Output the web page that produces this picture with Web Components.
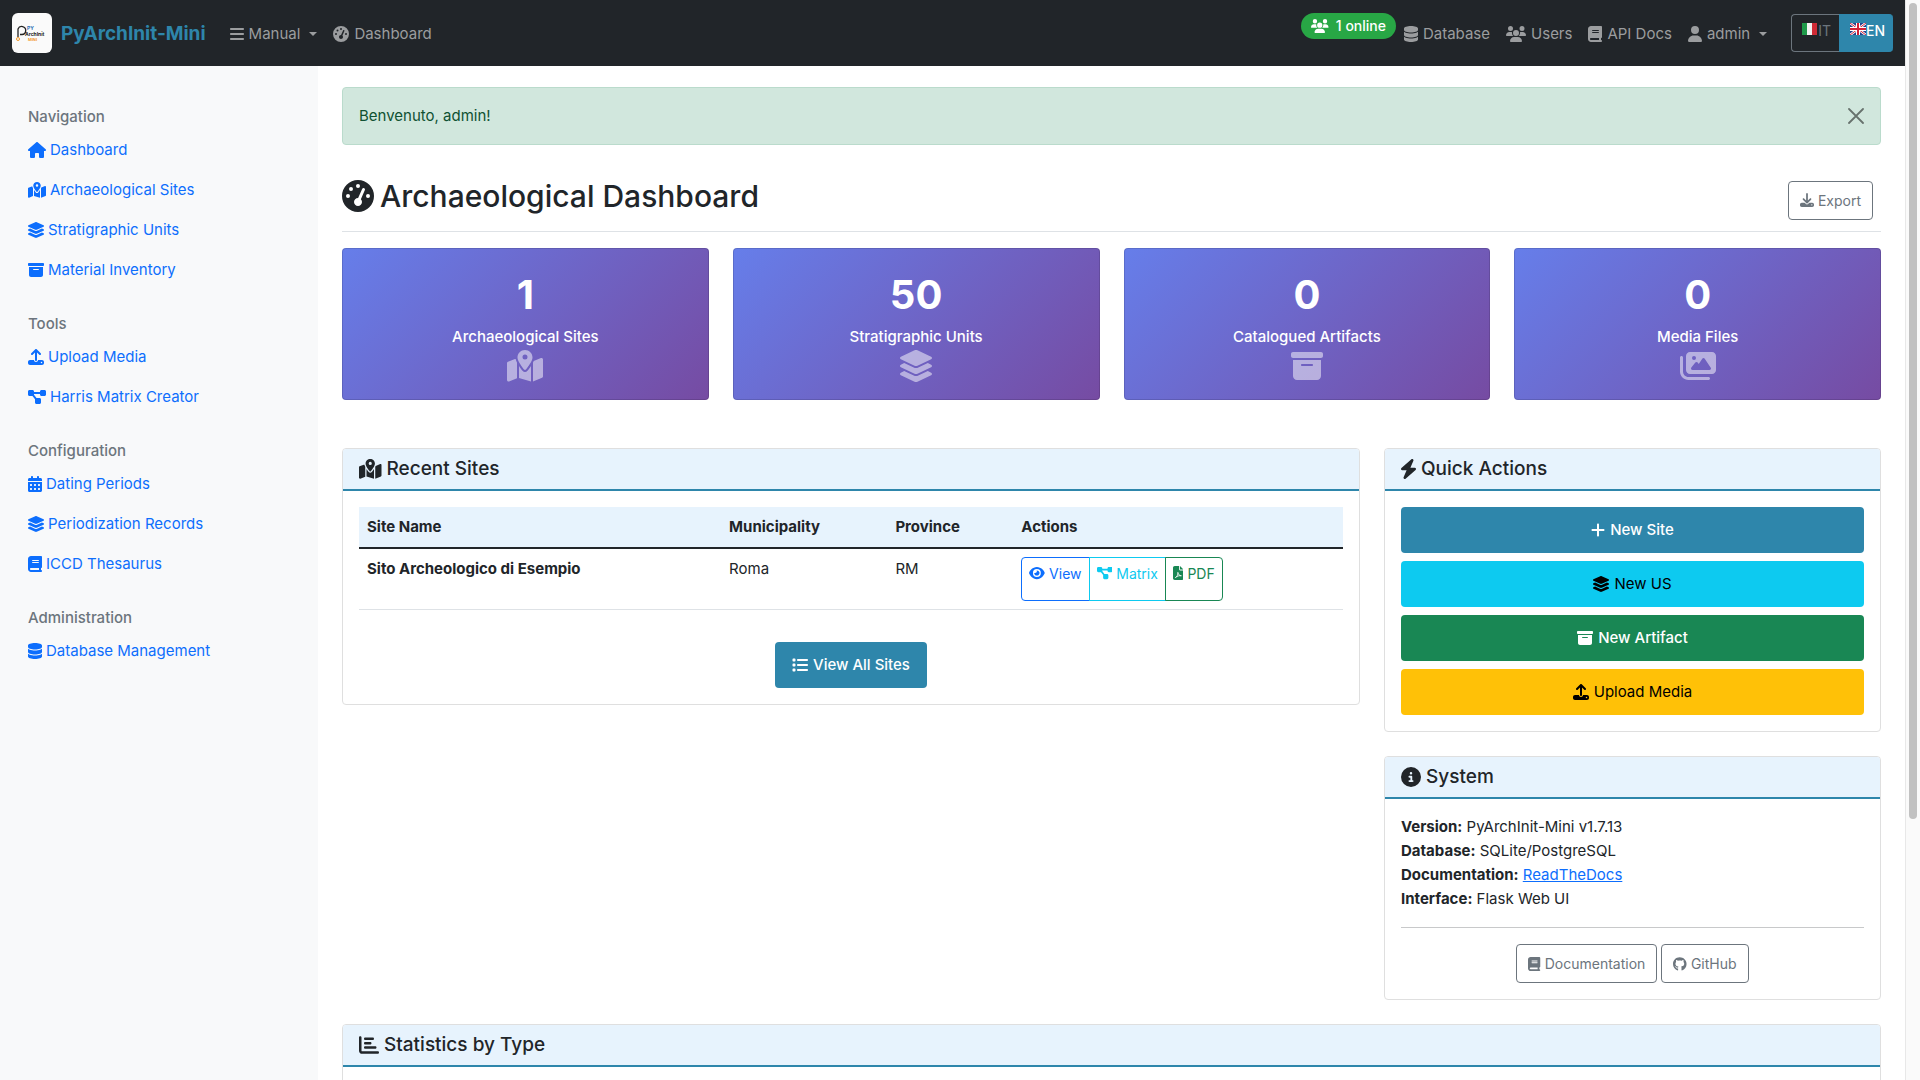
<!DOCTYPE html>
<html lang="en">
<head>
<meta charset="utf-8">
<title>PyArchInit-Mini</title>
<style>
  :root {
    --brand: #2e86ab;
    --ink: #212529;
    --muted: #6c757d;
    --link: #0d6efd;
    --tint: #e7f3fd;
    --fs: 15px;
    --fs-sm: 14px;
    --fs-lg: 19px;
  }
  body {
    margin: 0;
    display: flex;
    height: 100vh;
    overflow: hidden;
    background: #fff;
    color: var(--ink);
    font: 400 var(--fs)/24px Inter, "Liberation Sans", sans-serif;
  }
</style>
</head>
<body>
<app-page>
  <nav-bar slot="nav">
    <nav-item slot="start" icon="bars" menu>Manual</nav-item>
    <nav-item slot="start" icon="gauge">Dashboard</nav-item>
    <online-badge slot="end">1 online</online-badge>
    <nav-item slot="end" icon="database">Database</nav-item>
    <nav-item slot="end" icon="users">Users</nav-item>
    <nav-item slot="end" icon="book">API Docs</nav-item>
    <nav-item slot="end" icon="user" menu>admin</nav-item>
    <lang-switch slot="end"></lang-switch>
  </nav-bar>

  <side-bar slot="side">
    <side-group label="Navigation">
      <side-link icon="home">Dashboard</side-link>
      <side-link icon="map">Archaeological Sites</side-link>
      <side-link icon="layers">Stratigraphic Units</side-link>
      <side-link icon="archive">Material Inventory</side-link>
    </side-group>
    <side-group label="Tools">
      <side-link icon="upload">Upload Media</side-link>
      <side-link icon="diagram">Harris Matrix Creator</side-link>
    </side-group>
    <side-group label="Configuration">
      <side-link icon="calendar">Dating Periods</side-link>
      <side-link icon="layers">Periodization Records</side-link>
      <side-link icon="book">ICCD Thesaurus</side-link>
    </side-group>
    <side-group label="Administration">
      <side-link icon="database">Database Management</side-link>
    </side-group>
  </side-bar>

  <flash-message>Benvenuto, admin!</flash-message>
  <page-heading icon="gauge" label="Archaeological Dashboard">
    <ui-button kind="outline" icon="download">Export</ui-button>
  </page-heading>
  <dash-grid>
    <stat-card value="1" icon="map">Archaeological Sites</stat-card>
    <stat-card value="50" icon="layers">Stratigraphic Units</stat-card>
    <stat-card value="0" icon="archive">Catalogued Artifacts</stat-card>
    <stat-card value="0" icon="images">Media Files</stat-card>
    <panel-card class="wide" icon="map" label="Recent Sites">
      <sites-table></sites-table>
    </panel-card>
    <card-stack>
      <panel-card icon="bolt" label="Quick Actions">
        <action-list>
          <ui-button kind="primary" icon="plus">New Site</ui-button>
          <ui-button kind="info" icon="layers">New US</ui-button>
          <ui-button kind="success" icon="archive">New Artifact</ui-button>
          <ui-button kind="warning" icon="upload">Upload Media</ui-button>
        </action-list>
      </panel-card>
      <panel-card icon="info" label="System">
        <system-info>
          <ui-button kind="outline" icon="book">Documentation</ui-button>
          <ui-button kind="outline" icon="github">GitHub</ui-button>
        </system-info>
      </panel-card>
    </card-stack>
    <panel-card class="full" icon="chart" label="Statistics by Type"><stats-body></stats-body></panel-card>
  </dash-grid>
</app-page>
<scroll-rail></scroll-rail>

<script>
const ICONS = {
  home: ['0 0 576 512', 'M575.8 255.5c0 18-15 32.1-32 32.1h-32l.7 160.2c0 2.7-.2 5.4-.5 8.1V472c0 22.1-17.9 40-40 40H392c-22.1 0-40-17.9-40-40V384c0-17.7-14.3-32-32-32H256c-17.7 0-32 14.3-32 32v88c0 22.1-17.9 40-40 40H104c-22.1 0-40-17.9-40-40V287.6H32c-18 0-32-14-32-32.1c0-9 3-17 10-24L266.4 8c7-7 15-8 22-8s15 2 21 7L564.8 231.5c8 7 12 15 11 24z'],
  map: ['0 0 576 512', 'M408 120c0 54.6-73.1 151.9-105.2 192c-7.7 9.6-22 9.6-29.6 0C241.1 271.9 168 174.6 168 120C168 53.7 221.7 0 288 0s120 53.7 120 120zm8 80.4c3.5-6.9 6.7-13.8 9.6-20.6c.5-1.2 1-2.5 1.5-3.7l116-46.4C558.9 123.4 576 135 576 152V422.8c0 9.8-6 18.6-15.1 22.3L416 503V200.4zM137.6 138.3c2.4 14.1 7.2 28.3 12.8 41.5c2.9 6.8 6.1 13.7 9.6 20.6V451.8L32.9 502.7C17.1 509 0 497.4 0 480.4V209.6c0-9.8 6-18.6 15.1-22.3l122.6-49zM327.8 332c13.9-17.4 35.7-45.7 56.2-77V504.3L192 449.4V255c20.5 31.3 42.3 59.6 56.2 77c20.5 25.6 59.1 25.6 79.6 0zM288 152a40 40 0 1 0 0-80 40 40 0 1 0 0 80z'],
  layers: ['32 0 512 512', 'M264.5 5.2c14.9-6.9 32.1-6.9 47 0l218.6 101c8.5 3.9 13.9 12.4 13.9 21.8s-5.4 17.9-13.9 21.8l-218.6 101c-14.9 6.9-32.1 6.9-47 0L45.9 149.8C37.4 145.8 32 137.3 32 128s5.4-17.9 13.9-21.8L264.5 5.2zM476.9 209.6l53.2 24.6c8.5 3.9 13.9 12.4 13.9 21.8s-5.4 17.9-13.9 21.8l-218.6 101c-14.9 6.9-32.1 6.9-47 0L45.9 277.8C37.4 273.8 32 265.3 32 256s5.4-17.9 13.9-21.8l53.2-24.6 152 70.2c23.4 10.8 50.4 10.8 73.8 0l152-70.2zm-152 198.2l152-70.2 53.2 24.6c8.5 3.9 13.9 12.4 13.9 21.8s-5.4 17.9-13.9 21.8l-218.6 101c-14.9 6.9-32.1 6.9-47 0L45.9 405.8C37.4 401.8 32 393.3 32 384s5.4-17.9 13.9-21.8l53.2-24.6 152 70.2c23.4 10.8 50.4 10.8 73.8 0z'],
  archive: ['0 0 512 512', 'M32 32H480c17.7 0 32 14.3 32 32V96c0 17.7-14.3 32-32 32H32C14.3 128 0 113.7 0 96V64C0 46.3 14.3 32 32 32zm0 128H480V416c0 35.3-28.7 64-64 64H96c-35.3 0-64-28.7-64-64V160zm128 80c0 8.8 7.2 16 16 16H336c8.8 0 16-7.2 16-16s-7.2-16-16-16H176c-8.8 0-16 7.2-16 16z'],
  upload: ['0 0 512 512', 'M288 109.3V352c0 17.7-14.3 32-32 32s-32-14.3-32-32V109.3l-73.4 73.4c-12.5 12.5-32.8 12.5-45.3 0s-12.5-32.8 0-45.3l128-128c12.5-12.5 32.8-12.5 45.3 0l128 128c12.5 12.5 12.5 32.8 0 45.3s-32.8 12.5-45.3 0L288 109.3zM64 352H192c0 35.3 28.7 64 64 64s64-28.7 64-64H448c35.3 0 64 28.7 64 64v32c0 35.3-28.7 64-64 64H64c-35.3 0-64-28.7-64-64V416c0-35.3 28.7-64 64-64zM432 456a24 24 0 1 0 0-48 24 24 0 1 0 0 48z'],
  download: ['0 0 512 512', 'M288 32c0-17.7-14.3-32-32-32s-32 14.3-32 32V274.7l-73.4-73.4c-12.5-12.5-32.8-12.5-45.3 0s-12.5 32.8 0 45.3l128 128c12.5 12.5 32.8 12.5 45.3 0l128-128c12.5-12.5 12.5-32.8 0-45.3s-32.8-12.5-45.3 0L288 274.7V32zM64 352c-35.3 0-64 28.7-64 64v32c0 35.3 28.7 64 64 64H448c35.3 0 64-28.7 64-64V416c0-35.3-28.7-64-64-64H346.5l-45.3 45.3c-25 25-65.5 25-90.5 0L165.5 352H64zm368 56a24 24 0 1 1 0 48 24 24 0 1 1 0-48z'],
  diagram: ['0 0 576 512', 'M0 80C0 53.5 21.5 32 48 32h96c26.5 0 48 21.5 48 48V96H384V80c0-26.5 21.5-48 48-48h96c26.5 0 48 21.5 48 48v96c0 26.5-21.5 48-48 48H432c-26.5 0-48-21.5-48-48V160H192v16c0 1.7-.1 3.4-.3 5L272 288h96c26.5 0 48 21.5 48 48v96c0 26.5-21.5 48-48 48H272c-26.5 0-48-21.5-48-48V336c0-1.7 .1-3.4 .3-5L144 224H48c-26.5 0-48-21.5-48-48V80z'],
  calendar: ['0 0 448 512', 'M128 0c17.7 0 32 14.3 32 32V64H288V32c0-17.7 14.3-32 32-32s32 14.3 32 32V64h48c26.5 0 48 21.5 48 48v48H0V112C0 85.5 21.5 64 48 64H96V32c0-17.7 14.3-32 32-32zM0 192H448V464c0 26.5-21.5 48-48 48H48c-26.5 0-48-21.5-48-48V192zm64 80v32c0 8.8 7.2 16 16 16h32c8.8 0 16-7.2 16-16V272c0-8.8-7.2-16-16-16H80c-8.8 0-16 7.2-16 16zm128 0v32c0 8.8 7.2 16 16 16h32c8.8 0 16-7.2 16-16V272c0-8.8-7.2-16-16-16H208c-8.8 0-16 7.2-16 16zm144-16c-8.8 0-16 7.2-16 16v32c0 8.8 7.2 16 16 16h32c8.8 0 16-7.2 16-16V272c0-8.8-7.2-16-16-16H336zM64 400v32c0 8.8 7.2 16 16 16h32c8.8 0 16-7.2 16-16V400c0-8.8-7.2-16-16-16H80c-8.8 0-16 7.2-16 16zm144-16c-8.8 0-16 7.2-16 16v32c0 8.8 7.2 16 16 16h32c8.8 0 16-7.2 16-16V400c0-8.8-7.2-16-16-16H208zm112 16v32c0 8.8 7.2 16 16 16h32c8.8 0 16-7.2 16-16V400c0-8.8-7.2-16-16-16H336c-8.8 0-16 7.2-16 16z'],
  book: ['0 0 448 512', 'M96 0C43 0 0 43 0 96V416c0 53 43 96 96 96H416c17.7 0 32-14.3 32-32s-14.3-32-32-32V384c17.7 0 32-14.3 32-32V32c0-17.7-14.3-32-32-32H96zm0 384H352v64H96c-17.7 0-32-14.3-32-32s14.3-32 32-32zm32-240c0-8.8 7.2-16 16-16H336c8.8 0 16 7.2 16 16s-7.2 16-16 16H144c-8.8 0-16-7.2-16-16zm16 48H336c8.8 0 16 7.2 16 16s-7.2 16-16 16H144c-8.8 0-16-7.2-16-16s7.2-16 16-16z'],
  database: ['0 0 448 512', 'M448 80v48c0 44.2-100.3 80-224 80S0 172.2 0 128V80C0 35.8 100.3 0 224 0S448 35.8 448 80zM393.2 214.7c20.8-7.4 39.9-16.9 54.8-28.6V288c0 44.2-100.3 80-224 80S0 332.2 0 288V186.1c14.9 11.8 34 21.2 54.8 28.6C99.7 230.7 159.5 240 224 240s124.3-9.3 169.2-25.3zM0 346.1c14.9 11.8 34 21.2 54.8 28.6C99.7 390.7 159.5 400 224 400s124.3-9.3 169.2-25.3c20.8-7.4 39.9-16.9 54.8-28.6V432c0 44.2-100.3 80-224 80S0 476.2 0 432V346.1z'],
  bars: ['0 0 448 512', 'M0 96C0 78.3 14.3 64 32 64H416c17.7 0 32 14.3 32 32s-14.3 32-32 32H32C14.3 128 0 113.7 0 96zM0 256c0-17.7 14.3-32 32-32H416c17.7 0 32 14.3 32 32s-14.3 32-32 32H32c-17.7 0-32-14.3-32-32zM448 416c0 17.7-14.3 32-32 32H32c-17.7 0-32-14.3-32-32s14.3-32 32-32H416c17.7 0 32 14.3 32 32z'],
  gauge: ['0 0 512 512', 'M0 256a256 256 0 1 1 512 0A256 256 0 1 1 0 256zM288 96a32 32 0 1 0 -64 0 32 32 0 1 0 64 0zM256 416c35.3 0 64-28.7 64-64c0-17.4-6.9-33.1-18.1-44.6L366 161.7c5.3-12.1-.2-26.3-12.3-31.6s-26.3 .2-31.6 12.3L257.9 288c-.6 0-1.3 0-1.9 0c-35.3 0-64 28.7-64 64s28.7 64 64 64zM176 144a32 32 0 1 0 -64 0 32 32 0 1 0 64 0zM96 288a32 32 0 1 0 0-64 32 32 0 1 0 0 64zm352-32a32 32 0 1 0 -64 0 32 32 0 1 0 64 0z'],
  users: ['0 0 640 512', 'M144 0a80 80 0 1 1 0 160A80 80 0 1 1 144 0zM512 0a80 80 0 1 1 0 160A80 80 0 1 1 512 0zM0 298.7C0 239.8 47.8 192 106.7 192h42.7c15.9 0 31 3.5 44.6 9.7c-1.3 7.2-1.9 14.7-1.9 22.3c0 38.2 16.8 72.5 43.3 96c-.2 0-.4 0-.7 0H21.3C9.6 320 0 310.4 0 298.7zM405.3 320c-.2 0-.4 0-.7 0c26.6-23.5 43.3-57.8 43.3-96c0-7.6-.7-15-1.9-22.3c13.6-6.3 28.7-9.7 44.6-9.7h42.7C592.2 192 640 239.8 640 298.7c0 11.8-9.6 21.3-21.3 21.3H405.3zM224 224a96 96 0 1 1 192 0 96 96 0 1 1 -192 0zM128 485.3C128 411.7 187.7 352 261.3 352H378.7C452.3 352 512 411.7 512 485.3c0 14.7-11.9 26.7-26.7 26.7H154.7c-14.7 0-26.7-11.9-26.7-26.7z'],
  user: ['0 0 448 512', 'M224 256A128 128 0 1 0 224 0a128 128 0 1 0 0 256zm-45.7 48C79.8 304 0 383.8 0 482.3C0 498.7 13.3 512 29.7 512H418.3c16.4 0 29.7-13.3 29.7-29.7C448 383.8 368.2 304 269.7 304H178.3z'],
  bolt: ['32 0 384 512', 'M349.4 44.6c5.9-13.7 1.5-29.7-10.6-38.5s-28.6-8-39.9 1.8l-256 224c-10 8.8-13.6 22.9-8.9 35.3S50.7 288 64 288H175.5L98.6 467.4c-5.9 13.7-1.5 29.7 10.6 38.5s28.6 8 39.9-1.8l256-224c10-8.8 13.6-22.9 8.9-35.3s-16.6-20.7-30-20.7H272.5L349.4 44.6z'],
  info: ['0 0 512 512', 'M256 512A256 256 0 1 0 256 0a256 256 0 1 0 0 512zM216 336h24V272H216c-13.3 0-24-10.7-24-24s10.7-24 24-24h48c13.3 0 24 10.7 24 24v88h8c13.3 0 24 10.7 24 24s-10.7 24-24 24H216c-13.3 0-24-10.7-24-24s10.7-24 24-24zm40-208a32 32 0 1 1 0 64 32 32 0 1 1 0-64z'],
  chart: ['0 0 512 512', 'M32 32c17.7 0 32 14.3 32 32V400c0 8.8 7.2 16 16 16H480c17.7 0 32 14.3 32 32s-14.3 32-32 32H80c-44.2 0-80-35.8-80-80V64C0 46.3 14.3 32 32 32zm96 64c0-17.7 14.3-32 32-32l192 0c17.7 0 32 14.3 32 32s-14.3 32-32 32H160c-17.7 0-32-14.3-32-32zm32 80H288c17.7 0 32 14.3 32 32s-14.3 32-32 32H160c-17.7 0-32-14.3-32-32s14.3-32 32-32zm0 112H416c17.7 0 32 14.3 32 32s-14.3 32-32 32H160c-17.7 0-32-14.3-32-32s14.3-32 32-32z'],
  plus: ['0 0 448 512', 'M256 80c0-17.7-14.3-32-32-32s-32 14.3-32 32V224H48c-17.7 0-32 14.3-32 32s14.3 32 32 32H192V432c0 17.7 14.3 32 32 32s32-14.3 32-32V288H400c17.7 0 32-14.3 32-32s-14.3-32-32-32H256V80z'],
  list: ['0 0 512 512', 'M40 48C26.7 48 16 58.7 16 72v48c0 13.3 10.7 24 24 24H88c13.3 0 24-10.7 24-24V72c0-13.3-10.7-24-24-24H40zM192 64c-17.7 0-32 14.3-32 32s14.3 32 32 32H480c17.7 0 32-14.3 32-32s-14.3-32-32-32H192zm0 160c-17.7 0-32 14.3-32 32s14.3 32 32 32H480c17.7 0 32-14.3 32-32s-14.3-32-32-32H192zm0 160c-17.7 0-32 14.3-32 32s14.3 32 32 32H480c17.7 0 32-14.3 32-32s-14.3-32-32-32H192zM16 232v48c0 13.3 10.7 24 24 24H88c13.3 0 24-10.7 24-24V232c0-13.3-10.7-24-24-24H40c-13.3 0-24 10.7-24 24zM40 368c-13.3 0-24 10.7-24 24v48c0 13.3 10.7 24 24 24H88c13.3 0 24-10.7 24-24V392c0-13.3-10.7-24-24-24H40z'],
  eye: ['0 0 576 512', 'M288 32c-80.8 0-145.5 36.8-192.6 80.6C48.6 156 17.3 208 2.5 243.7c-3.3 7.9-3.3 16.7 0 24.6C17.3 304 48.6 356 95.4 399.4C142.5 443.2 207.2 480 288 480s145.5-36.8 192.6-80.6c46.8-43.5 78.1-95.4 93-131.1c3.3-7.9 3.3-16.7 0-24.6c-14.9-35.7-46.2-87.7-93-131.1C433.5 68.8 368.8 32 288 32zM144 256a144 144 0 1 1 288 0 144 144 0 1 1 -288 0zm144-64c0 35.3-28.7 64-64 64c-7.1 0-13.9-1.2-20.3-3.3c-5.5-1.8-11.9 1.6-11.7 7.4c.3 6.9 1.3 13.8 3.2 20.7c13.7 51.2 66.4 81.6 117.6 67.9s81.6-66.4 67.9-117.6c-11.1-41.5-47.8-69.4-88.6-71.1c-5.8-.2-9.2 6.1-7.4 11.7c2.1 6.4 3.3 13.2 3.3 20.3z'],
  pdf: ['0 0 384 512', 'M0 64C0 28.7 28.7 0 64 0H224V128c0 17.7 14.3 32 32 32H384V448c0 35.3-28.7 64-64 64H64c-35.3 0-64-28.7-64-64V64zm384 64H256V0L384 128z',
    '<path d="M88 424C150 392 186 316 178 232C196 312 238 362 306 356C232 346 150 366 88 424Z" fill="none" stroke="#fff" stroke-width="30" stroke-linejoin="round"/>'],
  images: ['0 0 576 512', 'M160 32c-35.3 0-64 28.7-64 64V320c0 35.3 28.7 64 64 64H512c35.3 0 64-28.7 64-64V96c0-35.3-28.7-64-64-64H160zM396 138.7l96 144c4.9 7.4 5.4 16.8 1.2 24.6S480.9 320 472 320H328 280 200c-9.2 0-17.6-5.3-21.6-13.6s-2.9-18.2 2.9-25.4l64-80c4.6-5.7 11.4-9 18.7-9s14.2 3.3 18.7 9l17.3 21.6 56-84C360.5 132 368 128 376 128s15.5 4 20 10.7zM192 128a32 32 0 1 1 64 0 32 32 0 1 1 -64 0zM48 120c0-13.3-10.7-24-24-24S0 106.7 0 120V344c0 75.1 60.9 136 136 136H456c13.3 0 24-10.7 24-24s-10.7-24-24-24H136c-48.6 0-88-39.4-88-88V120z'],
  github: ['0 0 496 512', 'M244.8 8C106.1 8 0 113.3 0 252c0 110.9 69.8 205.8 169.5 239.2 12.8 2.3 17.3-5.6 17.3-12.1 0-6.2-.3-40.4-.3-61.4 0 0-70 15-84.7-29.8 0 0-11.4-29.1-27.8-36.6 0 0-22.9-15.7 1.6-15.4 0 0 24.9 2 38.6 25.8 21.9 38.6 58.6 27.5 72.9 20.9 2.3-16 8.8-27.1 16-33.7-55.9-6.2-112.3-14.3-112.3-110.5 0-27.5 7.6-41.3 23.6-58.9-2.6-6.5-11.1-33.3 2.6-67.9 20.9-6.5 69 27 69 27 20-5.6 41.5-8.5 62.8-8.5s42.8 2.9 62.8 8.5c0 0 48.1-33.6 69-27 13.7 34.7 5.2 61.4 2.6 67.9 16 17.7 25.8 31.5 25.8 58.9 0 96.5-58.9 104.2-114.8 110.5 9.2 7.9 17 22.9 17 46.4 0 33.7-.3 75.4-.3 83.6 0 6.5 4.6 14.4 17.3 12.1C428.2 457.8 496 362.9 496 252 496 113.3 383.5 8 244.8 8z']
};

// Registers an element whose shadow root is built from render(element).
function define(name, render) {
  customElements.define(name, class extends HTMLElement {
    connectedCallback() {
      if (this.shadowRoot) return;
      this.attachShadow({ mode: 'open' }).innerHTML = render(this);
    }
  });
}
const attr = (el, key) => el.getAttribute(key) || '';
const icon = name => `<ui-icon name="${name}"></ui-icon>`;

define('ui-icon', el => {
  const [box, d, extra = ''] = ICONS[attr(el, 'name')];
  return `<style>
    :host { display: inline-flex; flex: none; }
    svg { display: block; height: var(--icon, 16px); width: auto; fill: currentColor; fill-rule: evenodd; }
  </style><svg viewBox="${box}" aria-hidden="true"><path d="${d}"/>${extra}</svg>`;
});

define('app-page', () => `<style>
    :host { flex: 1; min-width: 0; display: flex; flex-direction: column; overflow-y: auto; scrollbar-width: none; }
    .row { display: flex; flex: 1 0 auto; }
    aside, main { box-sizing: border-box; }
    aside { flex: 0 0 318px; background: #f8f9fa; }
    main { flex: 1; min-width: 0; padding: 21px 24px 24px; }
  </style>
  <slot name="nav"></slot>
  <div class="row"><aside><slot name="side"></slot></aside><main><slot></slot></main></div>`);

define('scroll-rail', () => `<style>
    :host { display: block; box-sizing: border-box; flex: none; width: 15px; padding: 3px; background: #fafafa; border-left: 1px solid #e8e8e8; }
    div { width: 8px; height: 76%; border-radius: 4px; background: #c1c1c1; }
  </style><div></div>`);

define('nav-bar', () => `<style>
    :host { display: flex; flex: none; background: #212529; padding: 13px 12px; }
    .brand { display: flex; align-items: center; gap: 9px; margin-right: 16px; text-decoration: none; color: var(--brand); font-size: var(--fs-lg); font-weight: 700; }
    .brand span { padding-top: 2px; }
    .group { display: flex; align-items: center; }
    .end { margin-left: auto; }
    svg { display: block; }
  </style>
  <a class="brand" href="#">
    <svg width="40" height="40" viewBox="0 0 40 40" font-family="Inter, sans-serif" font-weight="700">
      <rect width="40" height="40" rx="6" fill="#fafafa"/>
      <path d="M6 24V16a4 4 0 1 1 4 5.500H8" fill="none" stroke="#222" stroke-width="1.300"/>
      <circle cx="6" cy="26" r="1.500" fill="none" stroke="#f39a2b"/>
      <text x="15" y="17" font-size="5" fill="#2b6fb5">PY</text>
      <text x="13" y="23" font-size="5" fill="#222">ArchInit</text>
      <text x="16" y="28" font-size="4" fill="#f39a2b">MINI</text>
    </svg>
    <span>PyArchInit-Mini</span>
  </a>
  <div class="group"><slot name="start"></slot></div>
  <div class="group end"><slot name="end"></slot></div>`);

define('nav-item', el => {
  const menu = el.hasAttribute('menu');
  const tag = menu ? 'button type="button" aria-haspopup="true"' : 'a href="#"';
  return `<style>
    :host { display: block; }
    a, button { display: flex; align-items: center; gap: 5px; padding: 8px 8px 7px; border: 0; background: none; font: inherit; text-decoration: none; color: #9b9d9f; }
    .text { padding-top: 1px; }
    .caret { margin-left: 4px; border: 4px solid transparent; border-top-color: currentColor; border-bottom: 0; }
  </style><${tag}>${icon(attr(el, 'icon'))}<span class="text"><slot></slot></span>${menu ? '<span class="caret"></span>' : ''}</${menu ? 'button' : 'a'}>`;
});

define('online-badge', () => `<style>
    :host { --icon: 14px; display: flex; align-self: flex-start; align-items: center; gap: 7px; height: 26px; padding: 0 10px; border-radius: 13px; background: #28a745; color: #fff; font-size: var(--fs-sm); font-weight: 500; }
  </style>${icon('users')}<span><slot></slot></span>`);

define('lang-switch', () => `<style>
    :host { display: flex; height: 38px; margin-left: 16px; }
    button { display: flex; align-items: flex-start; box-sizing: border-box; margin: 0; padding: 5px 8px 0 10px; border: 1px solid var(--muted); background: none; color: var(--muted); font: 400 var(--fs-sm)/21px Inter, sans-serif; border-radius: 4px 0 0 4px; border-right: 0; }
    button.on { background: var(--brand); border-color: var(--brand); color: #fff; font-weight: 500; border-radius: 0 4px 4px 0; }
    svg { display: block; margin-top: 3px; }
  </style>
  <button type="button"><svg width="16" height="12" viewBox="0 0 16 12"><path fill="#1f9a4a" d="M0 0h5v12H0z"/><path fill="#f2f2f2" d="M5 0h5v12H5z"/><path fill="#cf2b36" d="M10 0h5v12h-5z"/></svg>IT</button>
  <button type="button" class="on"><svg width="16" height="12" viewBox="0 0 16 12"><path fill="#26408b" d="M0 0h16v12H0z"/><path d="M0 0l16 12M16 0L0 12" stroke="#fff" stroke-width="2.500"/><path d="M0 0l16 12M16 0L0 12" stroke="#d32036"/><path d="M8 0v12M0 6h16" stroke="#fff" stroke-width="4"/><path d="M8 0v12M0 6h16" stroke="#d32036" stroke-width="2"/></svg>EN</button>`);

define('side-bar', () => `<style>
    :host { display: block; padding: 17px 12px; }
  </style><nav><slot></slot></nav>`);

define('side-group', el => `<style>
    :host { display: block; padding-top: 24px; }
    h6 { margin: 0 16px 4px; color: var(--muted); font-size: var(--fs); font-weight: 500; line-height: 19px; }
  </style><h6>${attr(el, 'label')}</h6><slot></slot>`);

define('side-link', el => `<style>
    :host { display: block; }
    a { display: flex; align-items: center; gap: 4px; padding: 8px 16px; color: var(--link); text-decoration: none; }
  </style><a href="#">${icon(attr(el, 'icon'))}<span><slot></slot></span></a>`);

define('flash-message', () => `<style>
    :host { display: flex; justify-content: space-between; align-items: center; padding: 16px; border: 1px solid #badbcc; border-radius: 4px; background: #d1e7dd; color: #0f5132; }
    button { display: block; border: 0; padding: 0; background: none; opacity: .5; color: #000; }
    svg { display: block; width: 16px; height: 16px; }
  </style><span><slot></slot></span>
  <button type="button" aria-label="Close"><svg viewBox="0 0 16 16"><path d="M1 1l14 14M15 1L1 15" stroke="currentColor" stroke-width="1.800" stroke-linecap="round"/></svg></button>`);

define('page-heading', el => `<style>
    :host { display: flex; justify-content: space-between; align-items: center; padding: 32px 8px 8px 0; margin-bottom: 16px; border-bottom: 1px solid #dee2e6; }
    h1 { --icon: 32px; display: flex; align-items: center; gap: 6px; margin: 0 0 8px; font-size: 30px; font-weight: 500; line-height: 38px; }
  </style><h1>${icon(attr(el, 'icon'))}<span>${attr(el, 'label')}</span></h1><slot></slot>`);

define('dash-grid', () => `<style>
    :host { display: grid; grid-template-columns: repeat(12, minmax(0, 1fr)); gap: 24px; align-items: start; }
    ::slotted(stat-card) { grid-column: span 3; margin-bottom: 24px; }
    ::slotted(.wide) { grid-column: span 8; }
    ::slotted(card-stack) { grid-column: span 4; }
    ::slotted(.full) { grid-column: 1 / -1; }
  </style><slot></slot>`);

define('card-stack', () => `<style>:host { display: flex; flex-direction: column; gap: 24px; }</style><slot></slot>`);

define('stat-card', el => `<style>
    :host { --icon: 32px; display: flex; flex-direction: column; align-items: center; padding: 16px; border: 1px solid rgba(0,0,0,.125); border-radius: 4px; background: linear-gradient(135deg, #667eea 0%, #764ba2 100%) border-box; color: #fff; }
    strong { font-size: 40px; font-weight: 700; line-height: 60px; }
    .label { font-weight: 500; }
    .glyph { display: flex; align-items: center; height: 34px; opacity: .5; }
  </style><strong>${attr(el, 'value')}</strong><span class="label"><slot></slot></span><span class="glyph">${icon(attr(el, 'icon'))}</span>`);

define('panel-card', el => `<style>
    :host { display: block; border: 1px solid #dfdfdf; border-radius: 4px; background: #fff; }
    h5 { --icon: 20px; display: flex; align-items: center; gap: 5px; margin: 0; padding: 8px 16px; border-bottom: 2px solid var(--brand); border-radius: 3px 3px 0 0; background: var(--tint); font-size: var(--fs-lg); font-weight: 500; line-height: 24px; }
    div { padding: 16px; }
  </style><h5>${icon(attr(el, 'icon'))}<span>${attr(el, 'label')}</span></h5><div><slot></slot></div>`);

define('ui-button', el => `<style>
    :host { display: block; }
    a { display: flex; align-items: center; justify-content: center; gap: 5px; padding: 10px 16px; border: 1px solid transparent; border-radius: 4px; font-weight: 500; text-decoration: none; }
    .primary { background: var(--brand); color: #fff; }
    .info { background: #0dcaf0; color: #000; font-weight: 400; }
    .success { background: #198754; color: #fff; }
    .warning { background: #ffc107; color: #000; font-weight: 400; }
    .outline { --icon: 14px; gap: 4px; padding: 8px 11px; border-color: var(--muted); color: var(--muted); font-size: var(--fs-sm); font-weight: 400; line-height: 21px; }
  </style><a href="#" class="${attr(el, 'kind')}">${icon(attr(el, 'icon'))}<span><slot></slot></span></a>`);

define('action-list', () => `<style>:host { display: grid; gap: 8px; }</style><slot></slot>`);

define('sites-table', () => `<style>
    :host { display: flex; flex-direction: column; align-items: center; gap: 32px; }
    table { width: 100%; table-layout: fixed; border-collapse: separate; border-spacing: 0; }
    th, td { padding: 8px; text-align: left; vertical-align: top; }
    thead th { background: var(--tint); border-bottom: 2px solid var(--ink); font-weight: 700; }
    td { border-bottom: 1px solid #dee2e6; }
    td strong { font-weight: 700; }
    .actions { --icon: 14px; display: flex; height: 44px; }
    .actions a { display: flex; align-items: flex-start; gap: 4px; padding: 5px 7px 0; border: 1px solid; text-decoration: none; font-size: var(--fs-sm); line-height: 21px; }
    .actions ui-icon { padding: 3px 0; }
    .actions a + a { margin-left: -1px; }
    .view { color: var(--link); border-radius: 4px 0 0 4px; }
    .matrix { color: #0dcaf0; }
    .pdf { color: #198754; border-radius: 0 4px 4px 0; }
  </style>
  <table>
    <colgroup><col style="width:36.800%"><col style="width:16.900%"><col style="width:12.800%"><col></colgroup>
    <thead><tr><th>Site Name</th><th>Municipality</th><th>Province</th><th>Actions</th></tr></thead>
    <tbody><tr>
      <td><strong>Sito Archeologico di Esempio</strong></td><td>Roma</td><td>RM</td>
      <td><div class="actions">
        <a class="view" href="#">${icon('eye')}View</a><a class="matrix" href="#">${icon('diagram')}Matrix</a><a class="pdf" href="#">${icon('pdf')}PDF</a>
      </div></td>
    </tr></tbody>
  </table>
  <ui-button kind="primary" icon="list">View All Sites</ui-button>`);

define('system-info', () => `<style>
    :host { display: block; }
    p { margin: 0; }
    strong { font-weight: 700; }
    a { color: var(--link); }
    hr { margin: 16px 0; border: 0; border-top: 1px solid #c8c9ca; }
    .links { display: flex; justify-content: center; gap: 4px; }
  </style>
  <p><strong>Version:</strong> PyArchInit-Mini v1.7.13<br>
  <strong>Database:</strong> SQLite/PostgreSQL<br>
  <strong>Documentation:</strong> <a href="#">ReadTheDocs</a><br>
  <strong>Interface:</strong> Flask Web UI</p>
  <hr><div class="links"><slot></slot></div>`);

define('stats-body', () => `<style>:host { display: block; min-height: 320px; }</style>`);
</script>
</body>
</html>
